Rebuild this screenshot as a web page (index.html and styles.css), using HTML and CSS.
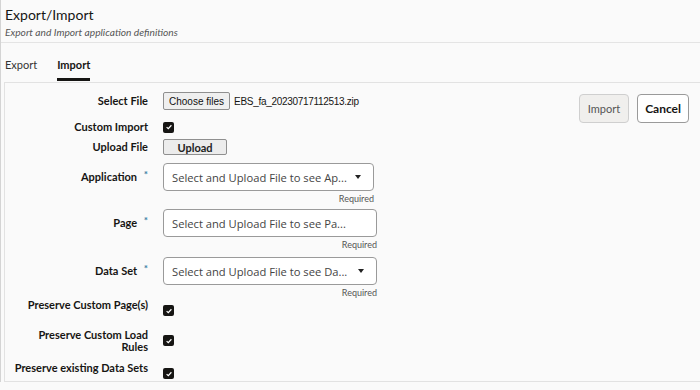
FILE: index.html
```html
<!doctype html>
<html lang="en">
<head>
  <title>Export/Import</title>
  <meta charset="UTF-8">
  <link rel="stylesheet" href="styles.css">
</head>
<body>
  <div class="page">
    <div class="header">
      <h1>Export/Import</h1>
      <div class="subtitle">Export and Import application definitions</div>
    </div>
    <div class="tabs">
      <span class="tab">Export</span>
      <span class="tab active">Import</span>
    </div>
    <div class="panel">
      <div class="form">
        <div class="row r-file">
          <label class="label">Select File</label>
          <div class="field">
            <button type="button" class="native-btn">Choose files</button>
            <span class="filename">EBS_fa_20230717112513.zip</span>
          </div>
        </div>
        <div class="row r-check">
          <label class="label">Custom Import</label>
          <div class="field"><span class="check"><svg viewBox="0 0 10 10" width="8" height="8"><path d="M2 5.2 L4.1 7.2 L8 2.8" fill="none" stroke="#fff" stroke-width="1.5"/></svg></span></div>
        </div>
        <div class="row r-upload">
          <label class="label">Upload File</label>
          <div class="field"><button type="button" class="upload-btn">Upload</button></div>
        </div>
        <div class="row r-select">
          <label class="label">Application <span class="req">*</span></label>
          <div class="field column">
            <div class="select">
              <span class="placeholder">Select and Upload File to see Ap...</span>
              <span class="caret"></span>
            </div>
            <div class="hint">Required</div>
          </div>
        </div>
        <div class="row r-select">
          <label class="label">Page <span class="req">*</span></label>
          <div class="field column">
            <div class="select wide">
              <span class="placeholder">Select and Upload File to see Pa...</span>
            </div>
            <div class="hint">Required</div>
          </div>
        </div>
        <div class="row r-select r-last">
          <label class="label">Data Set <span class="req">*</span></label>
          <div class="field column">
            <div class="select wide">
              <span class="placeholder">Select and Upload File to see Da...</span>
              <span class="caret"></span>
            </div>
            <div class="hint">Required</div>
          </div>
        </div>
        <div class="row r-opt">
          <label class="label">Preserve Custom Page(s)</label>
          <div class="field"><span class="check"><svg viewBox="0 0 10 10" width="8" height="8"><path d="M2 5.2 L4.1 7.2 L8 2.8" fill="none" stroke="#fff" stroke-width="1.5"/></svg></span></div>
        </div>
        <div class="row r-opt r-two">
          <label class="label">Preserve Custom Load<br>Rules</label>
          <div class="field"><span class="check"><svg viewBox="0 0 10 10" width="8" height="8"><path d="M2 5.2 L4.1 7.2 L8 2.8" fill="none" stroke="#fff" stroke-width="1.5"/></svg></span></div>
        </div>
        <div class="row r-opt r-end">
          <label class="label">Preserve existing Data Sets</label>
          <div class="field"><span class="check"><svg viewBox="0 0 10 10" width="8" height="8"><path d="M2 5.2 L4.1 7.2 L8 2.8" fill="none" stroke="#fff" stroke-width="1.5"/></svg></span></div>
        </div>
      </div>
      <div class="actions">
        <button type="button" class="btn">Import</button>
        <button type="button" class="btn primary">Cancel</button>
      </div>
    </div>
  </div>
</body>
</html>
```

FILE: styles.css
```css
body {
  margin: 0;
  background: #fafafa;
  font-family: Lato, 'Open Sans', Arial, sans-serif;
  color: #161513;
}
.page {
  border-left: 1px solid #d4d4d4;
  min-height: 352px;
}
.header {
  padding: 6px 0 0 4px;
  border-bottom: 1px solid #e4e4e4;
  height: 36px;
}
h1 {
  margin: 0;
  font-size: 14px;
  font-weight: 400;
  line-height: 18px;
}
.subtitle {
  font-size: 10.2px;
  font-style: italic;
  color: #555;
  line-height: 13px;
  margin-top: 2px;
}
.tabs {
  display: flex;
  gap: 20px;
  padding: 15px 0 0 4px;
  margin-bottom: 1px;
}
.tab {
  font-size: 11px;
  line-height: 14px;
  padding-bottom: 9px;
  color: #333;
}
.tab.active {
  font-weight: 700;
  color: #161513;
  border-bottom: 3px solid #161513;
  padding-bottom: 6px;
}
.panel {
  display: flex;
  margin-left: 3px;
  border: 1px solid #e2e2e2;
  border-right: none;
  height: 300px;
  box-sizing: border-box;
  padding: 9px 11px 0 0;
}
.form {
  display: flex;
  flex-direction: column;
}
.row {
  display: flex;
  align-items: center;
}
.label {
  width: 143px;
  text-align: right;
  font-size: 11px;
  font-weight: 700;
  line-height: 12px;
  margin-right: 15px;
}
.req {
  color: #3a7ca5;
  font-size: 10px;
  margin-left: 4px;
  position: relative;
  top: -3px;
}
.field {
  display: flex;
  align-items: center;
}
.field.column {
  flex-direction: column;
  align-items: flex-end;
}
.native-btn {
  font-family: 'Liberation Sans', Arial, sans-serif;
  font-size: 10px;
  height: 18px;
  padding: 0 5px;
  background: #efefef;
  border: 1px solid #8f8f8f;
  border-radius: 2px;
  color: #111;
}
.filename {
  font-family: 'Liberation Sans', Arial, sans-serif;
  font-size: 10px;
  letter-spacing: -0.3px;
  margin-left: 4px;
}
.r-check {
  margin-top: 11px;
}
.check {
  display: inline-flex;
  align-items: center;
  justify-content: center;
  width: 11px;
  height: 11px;
  background: #161513;
  border-radius: 2px;
}
.r-upload {
  margin-top: 6px;
}
.upload-btn {
  font-family: Lato, Arial, sans-serif;
  font-size: 11px;
  font-weight: 700;
  width: 64px;
  height: 16px;
  padding: 0;
  background: #ececec;
  border: 1px solid #8f8f8f;
  border-radius: 2px;
  color: #222;
}
.r-select {
  align-items: flex-start;
  margin-top: 8px;
}
.r-select .label {
  margin-top: 8px;
}
.r-select + .r-select {
  margin-top: 4px;
}
.r-last {
  margin-top: 6px !important;
}
.select {
  display: flex;
  align-items: center;
  justify-content: space-between;
  width: 211px;
  height: 28px;
  box-sizing: border-box;
  border: 1px solid #9a9a9a;
  border-radius: 4px;
  background: #fff;
  padding: 0 12px 0 8px;
}
.select.wide {
  width: 214px;
}
.placeholder {
  font-family: 'Open Sans', Arial, sans-serif;
  font-size: 11.2px;
  color: #444;
  white-space: nowrap;
}
.caret {
  width: 0;
  height: 0;
  border-left: 3.5px solid transparent;
  border-right: 3.5px solid transparent;
  border-top: 4px solid #222;
}
.hint {
  font-size: 9px;
  color: #555;
  line-height: 12px;
  margin-top: 2px;
}
.r-opt {
  align-items: flex-start;
  margin-top: 0;
}
.r-opt .check {
  margin-top: 6px;
}
.r-two {
  margin-top: 13px;
}
.r-end {
  margin-top: 9px;
}
.actions {
  display: flex;
  gap: 8px;
  margin-left: auto;
  margin-top: 2px;
  align-self: flex-start;
}
.btn {
  height: 29px;
  padding: 0 8px;
  font-family: Lato, Arial, sans-serif;
  font-size: 11px;
  color: #555;
  background: #f0efed;
  border: 1px solid #cfcfcf;
  border-radius: 4px;
}
.btn.primary {
  background: #fff;
  border-color: #9a9a9a;
  color: #161513;
  font-weight: 700;
  font-size: 12px;
  padding: 0 7px;
}
```
